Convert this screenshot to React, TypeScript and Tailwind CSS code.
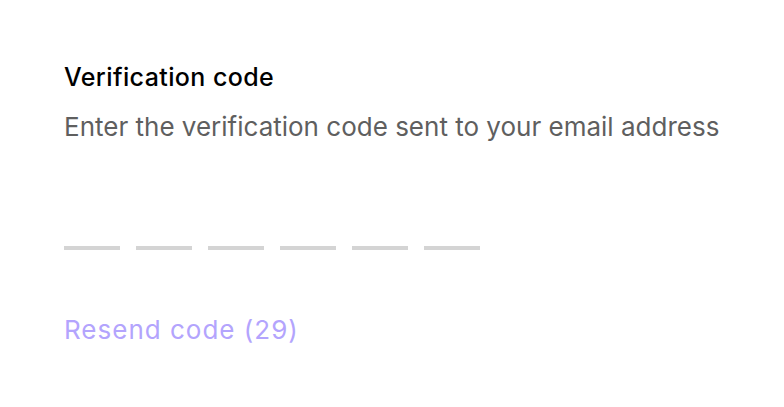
export default function App() {
  const slots = [0, 1, 2, 3, 4, 5];
  return (
    <div className="min-h-screen bg-white px-16 pt-[61px] font-['Inter',sans-serif]">
      <h2 className="text-[25px] font-medium leading-[32px] tracking-[0.4px] text-black">Verification code</h2>
      <p className="mt-[18px] text-[26px] leading-[32px] text-[#5f5f5f]">
        Enter the verification code sent to your email address
      </p>
      <div className="mt-[103px] flex gap-4">
        {slots.map((i) => (
          <div key={i} className="h-1 w-14 bg-[#d4d4d4]" />
        ))}
      </div>
      <button className="mt-[64px] text-[26px] leading-[32px] tracking-[1px] text-[#b3a4fd]">Resend code (29)</button>
    </div>
  );
}
